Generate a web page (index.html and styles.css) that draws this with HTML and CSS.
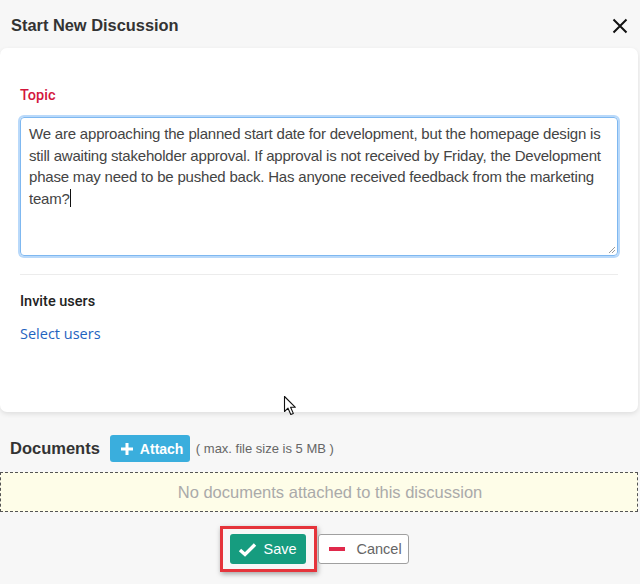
FILE: index.html
```html
<!DOCTYPE html>
<html>
<head>
<meta charset="utf-8">
<title>Start New Discussion</title>
<link rel="stylesheet" href="styles.css">
</head>
<body>
<div class="dialog">
    <div class="dialog-header">
        <h1 class="dialog-title">Start New Discussion</h1>
        <span class="close-btn">
            <svg width="16" height="16" viewBox="0 0 16 16"><path d="M1.5 1.5 L14.5 14.5 M14.5 1.5 L1.5 14.5" stroke="#111" stroke-width="2" fill="none"/></svg>
        </span>
    </div>

    <div class="card">
        <div class="topic-label">Topic</div>
        <div class="topic-box">We are approaching the planned start date for development, but the homepage design is still awaiting stakeholder approval. If approval is not received by Friday, the Development phase may need to be pushed back. Has anyone received feedback from the marketing team?<span class="caret"></span>
            <svg class="grip" width="9" height="9" viewBox="0 0 9 9"><path d="M8 2 L2 8 M8 5 L5 8" stroke="#999" stroke-width="1"/></svg>
        </div>
        <div class="divider"></div>
        <div class="invite-label">Invite users</div>
        <a class="select-link">Select users</a>

        <svg class="mouse" width="16" height="22" viewBox="0 0 16 22"><path d="M1.5 1.5 L1.5 16.5 L5 13.2 L7.8 19.5 L10.3 18.4 L7.6 12.3 L12.4 12.3 Z" fill="#fff" stroke="#111" stroke-width="1.1" stroke-linejoin="round"/></svg>
    </div>

    <div class="docs-row">
        <span class="docs-title">Documents</span>
        <span class="attach-btn">
            <svg width="14" height="14" viewBox="0 0 14 14"><path d="M7 1 V13 M1 7 H13" stroke="#fff" stroke-width="3"/></svg>
            Attach
        </span>
        <span class="docs-note">( max. file size is 5 MB )</span>
    </div>
    <div class="docs-box">No documents attached to this discussion</div>

    <div class="actions">
        <div class="highlight">
            <span class="save-btn">
                <svg width="19" height="15" viewBox="0 0 19 15"><path d="M2 8 L7 12.5 L17 2.5" stroke="#fff" stroke-width="3.4" fill="none"/></svg>
                Save
            </span>
        </div>
        <span class="cancel-btn">
            <span class="minus"></span>
            Cancel
        </span>
    </div>
</div>
</body>
</html>
```

FILE: styles.css
```css
body{
    margin:0;
    background-color:#f7f7f7;
    font-family:"Liberation Sans", Arial, sans-serif;
    color:#333;
}

.dialog{
    width:640px;
    height:584px;
}

.dialog-header{
    display:flex;
    align-items:center;
    justify-content:space-between;
    height:48px;
    padding:0 12px 0 11px;
    box-sizing:border-box;
}

.dialog-title{
    margin:0;
    font-size:16.4px;
    font-weight:bold;
    color:#333;
    padding-top:2px;
}

.close-btn{
    display:flex;
    padding-top:4px;
}

.card{
    position:relative;
    width:638px;
    height:364px;
    box-sizing:border-box;
    background-color:#fff;
    border-radius:7px;
    box-shadow:0 2px 5px rgba(0,0,0,0.10);
    padding:38px 20px 0 20px;
}

.topic-label{
    font-family:Roboto, "Liberation Sans", sans-serif;
    font-size:14.5px;
    font-weight:500;
    line-height:20px;
    color:#d3163c;
}

.topic-box{
    position:relative;
    margin-top:11px;
    width:598px;
    height:139px;
    box-sizing:border-box;
    border:1px solid #7fb8f0;
    border-radius:4px;
    box-shadow:0 0 0 2px #b9d9fa;
    padding:5px 8px;
    font-size:15px;
    letter-spacing:-0.2px;
    line-height:21.6px;
    color:#444;
}

.caret{
    display:inline-block;
    width:1px;
    height:18px;
    background-color:#111;
    vertical-align:-3px;
}

.grip{
    position:absolute;
    right:1px;
    bottom:1px;
}

.divider{
    margin-top:18px;
    height:1px;
    background-color:#ececec;
}

.invite-label{
    margin-top:17px;
    font-family:Roboto, "Liberation Sans", sans-serif;
    font-size:14.5px;
    font-weight:500;
    line-height:20px;
    color:#222;
}

.select-link{
    display:block;
    margin-top:12px;
    font-family:"Open Sans", "Liberation Sans", sans-serif;
    font-size:14.5px;
    line-height:20px;
    color:#1f63c0;
}

.mouse{
    position:absolute;
    left:283px;
    top:347px;
}

.docs-row{
    display:flex;
    align-items:center;
    height:27px;
    margin-top:23px;
    padding-left:10px;
}

.docs-title{
    font-size:16.5px;
    font-weight:bold;
    color:#333;
}

.attach-btn{
    display:flex;
    align-items:center;
    gap:6px;
    margin-left:10px;
    width:80px;
    height:27px;
    box-sizing:border-box;
    padding-left:10px;
    background-color:#3aaedd;
    border-radius:3px;
    color:#fff;
    font-size:14px;
    font-weight:bold;
}

.docs-note{
    margin-left:6px;
    font-size:13px;
    color:#666;
}

.docs-box{
    margin-top:10px;
    width:638px;
    height:40px;
    box-sizing:border-box;
    border:1px dashed #555;
    background-color:#fefde8;
    display:flex;
    align-items:center;
    justify-content:center;
    padding-left:22px;
    font-size:16.5px;
    color:#aaa;
}

.actions{
    display:flex;
    align-items:center;
    justify-content:center;
    margin-top:14px;
    padding-right:12px;
}

.highlight{
    border:3px solid #e5343b;
    padding:5px 8px 5px 7px;
    box-shadow:1px 2px 5px rgba(0,0,0,0.35);
    display:flex;
}

.save-btn{
    display:flex;
    align-items:center;
    gap:7px;
    width:76px;
    height:30px;
    box-sizing:border-box;
    padding-left:8px;
    background-color:#169c7f;
    border-radius:3px;
    color:#fff;
    font-size:14.5px;
}

.cancel-btn{
    display:flex;
    align-items:center;
    gap:12px;
    margin-left:1px;
    width:91px;
    height:30px;
    box-sizing:border-box;
    padding-left:10px;
    background-color:#fff;
    border:1px solid #a0a0a0;
    border-radius:3px;
    color:#666;
    font-size:14.5px;
}

.minus{
    display:inline-block;
    width:16px;
    height:4px;
    background-color:#e0294b;
}
```
